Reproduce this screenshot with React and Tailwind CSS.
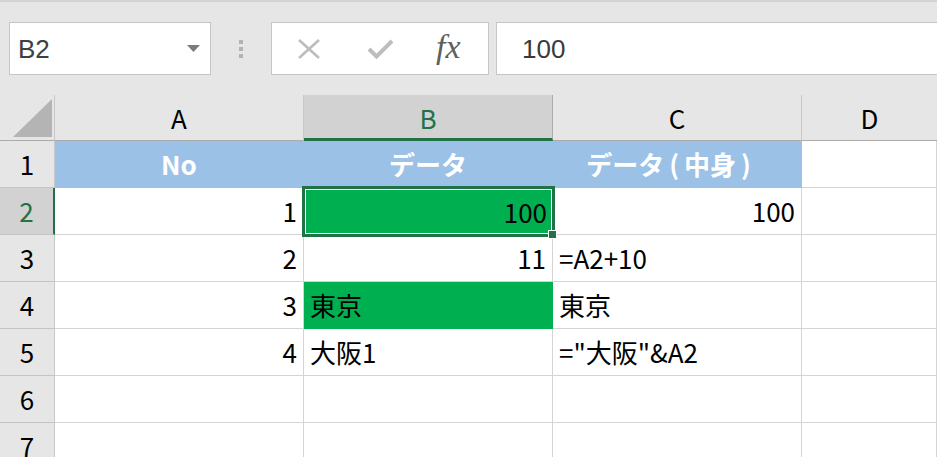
import React from "react";

const FONT = { fontFamily: '"Noto Sans CJK JP", "Noto Sans", sans-serif' };

function RowHeader({ n, selected }) {
  return (
    <div
      className={
        "w-[55px] shrink-0 h-full flex items-center justify-center border-b border-[#c4c4c4] " +
        (selected
          ? "bg-[#d2d2d2] text-[#217346] border-r-2 border-r-[#217346]"
          : "bg-[#e6e6e6] text-black border-r border-r-[#c8c8c8]")
      }
    >
      {n}
    </div>
  );
}

function Cell({ children, align = "left", fill, wide, extra = "" }) {
  const base = "h-full flex items-center px-[6px] border-r border-b whitespace-nowrap ";
  const w = wide ? "flex-1 min-w-0 " : "w-[249px] shrink-0 ";
  const j = align === "right" ? "justify-end " : align === "center" ? "justify-center " : "justify-start ";
  let f = "border-[#d4d4d4] ";
  if (fill === "blue") f = "bg-[#9bc2e6] border-[#9bc2e6] text-white font-bold ";
  if (fill === "green") f = "bg-[#00b050] border-[#00b050] ";
  return <div className={base + w + j + f + extra}>{children}</div>;
}

export default function App() {
  return (
    <div className="w-[937px] h-[457px] overflow-hidden bg-white text-[26px] leading-none text-black" style={FONT}>
      {/* Formula bar area */}
      <div className="h-[95px] bg-[#e6e6e6] border-t-2 border-[#d3d3d3] flex items-start pt-[20px]">
        <div className="ml-[9px] w-[202px] h-[53px] bg-white border border-[#c6c6c6] flex items-center pl-[8px] pr-[10px] justify-between">
          <span className="text-[#404040] text-[26px]" style={{ fontFamily: '"Liberation Sans", Arial, sans-serif' }}>B2</span>
          <svg width="13" height="8" viewBox="0 0 13 8"><polygon points="0,0 13,0 6.5,7" fill="#7b7b7b" /></svg>
        </div>
        <div className="w-[60px] h-[53px] flex flex-col items-center justify-center gap-[3px]">
          <div className="w-[4px] h-[4px] bg-[#b3b3b3]" />
          <div className="w-[4px] h-[4px] bg-[#b3b3b3]" />
          <div className="w-[4px] h-[4px] bg-[#b3b3b3]" />
        </div>
        <div className="w-[218px] h-[53px] bg-white border border-[#c6c6c6] flex items-center">
          <svg className="ml-[25px]" width="24" height="20" viewBox="0 0 24 20">
            <path d="M2 1 L22 19 M22 1 L2 19" stroke="#bdbdbd" strokeWidth="2.6" fill="none" />
          </svg>
          <svg className="ml-[46px]" width="27" height="21" viewBox="0 0 27 21">
            <path d="M2 11 L9.5 18.5 L25 3" stroke="#bdbdbd" strokeWidth="4" fill="none" />
          </svg>
          <span
            className="ml-[42px] italic text-[#5f5f5f] text-[34px] leading-none -mt-[4px]"
            style={{ fontFamily: '"Liberation Serif", "DejaVu Serif", serif' }}
          >
            fx
          </span>
        </div>
        <div className="ml-[7px] flex-1 h-[53px] bg-white border border-[#c6c6c6] border-r-0 flex items-center pl-[25px]">
          <span className="text-[#3a3a3a] text-[26px]" style={{ fontFamily: '"Liberation Sans", Arial, sans-serif' }}>100</span>
        </div>
      </div>

      {/* Column headers */}
      <div className="h-[46px] flex bg-[#e6e6e6]">
        <div className="w-[55px] shrink-0 h-full border-r border-[#c8c8c8] border-b border-b-[#ababab] flex items-end justify-end pr-[2px] pb-[3px]">
          <svg width="39" height="38" viewBox="0 0 39 38"><polygon points="39,0 39,38 0,38" fill="#b4b4b4" /></svg>
        </div>
        <div className="w-[249px] shrink-0 h-full flex items-center justify-center border-r border-[#c8c8c8] border-b border-b-[#ababab]">A</div>
        <div className="w-[249px] shrink-0 h-full flex items-center justify-center bg-[#d2d2d2] text-[#217346] border-r border-[#ababab] border-b-[3px] border-b-[#217346] pt-[2px]">B</div>
        <div className="w-[249px] shrink-0 h-full flex items-center justify-center border-r border-[#c8c8c8] border-b border-b-[#ababab]">C</div>
        <div className="flex-1 h-full flex items-center justify-center border-b border-b-[#ababab]">D</div>
      </div>

      {/* Row 1 */}
      <div className="h-[47px] flex">
        <RowHeader n="1" />
        <Cell fill="blue" align="center">No</Cell>
        <Cell fill="blue" align="center">データ</Cell>
        <Cell fill="blue" align="center" extra="pr-[18px]">
          データ<span className="mx-[5px]">(</span>中身<span className="mx-[5px]">)</span>
        </Cell>
        <Cell wide />
      </div>

      {/* Row 2 */}
      <div className="h-[47px] flex">
        <RowHeader n="2" selected />
        <Cell align="right">1</Cell>
        <div className="relative w-[249px] shrink-0 h-full z-10">
          <div className="h-full flex items-center justify-end px-[6px] bg-[#00b050]">100</div>
          <div className="absolute left-[-2px] top-[-2px] w-[253px] h-[51px] border-[3px] border-[#217346]">
            <div className="w-full h-full border border-white" />
          </div>
          <div className="absolute right-[-4px] bottom-[-4px] w-[9px] h-[9px] bg-[#217346] border border-white" />
        </div>
        <Cell align="right">100</Cell>
        <Cell wide />
      </div>

      {/* Row 3 */}
      <div className="h-[47px] flex">
        <RowHeader n="3" />
        <Cell align="right">2</Cell>
        <Cell align="right">11</Cell>
        <Cell>=A2+10</Cell>
        <Cell wide />
      </div>

      {/* Row 4 */}
      <div className="h-[47px] flex">
        <RowHeader n="4" />
        <Cell align="right">3</Cell>
        <Cell fill="green">東京</Cell>
        <Cell>東京</Cell>
        <Cell wide />
      </div>

      {/* Row 5 */}
      <div className="h-[47px] flex">
        <RowHeader n="5" />
        <Cell align="right">4</Cell>
        <Cell>大阪1</Cell>
        <Cell>="大阪"&amp;A2</Cell>
        <Cell wide />
      </div>

      {/* Row 6 */}
      <div className="h-[47px] flex">
        <RowHeader n="6" />
        <Cell />
        <Cell />
        <Cell />
        <Cell wide />
      </div>

      {/* Row 7 */}
      <div className="h-[47px] flex">
        <RowHeader n="7" />
        <Cell />
        <Cell />
        <Cell />
        <Cell wide />
      </div>
    </div>
  );
}
